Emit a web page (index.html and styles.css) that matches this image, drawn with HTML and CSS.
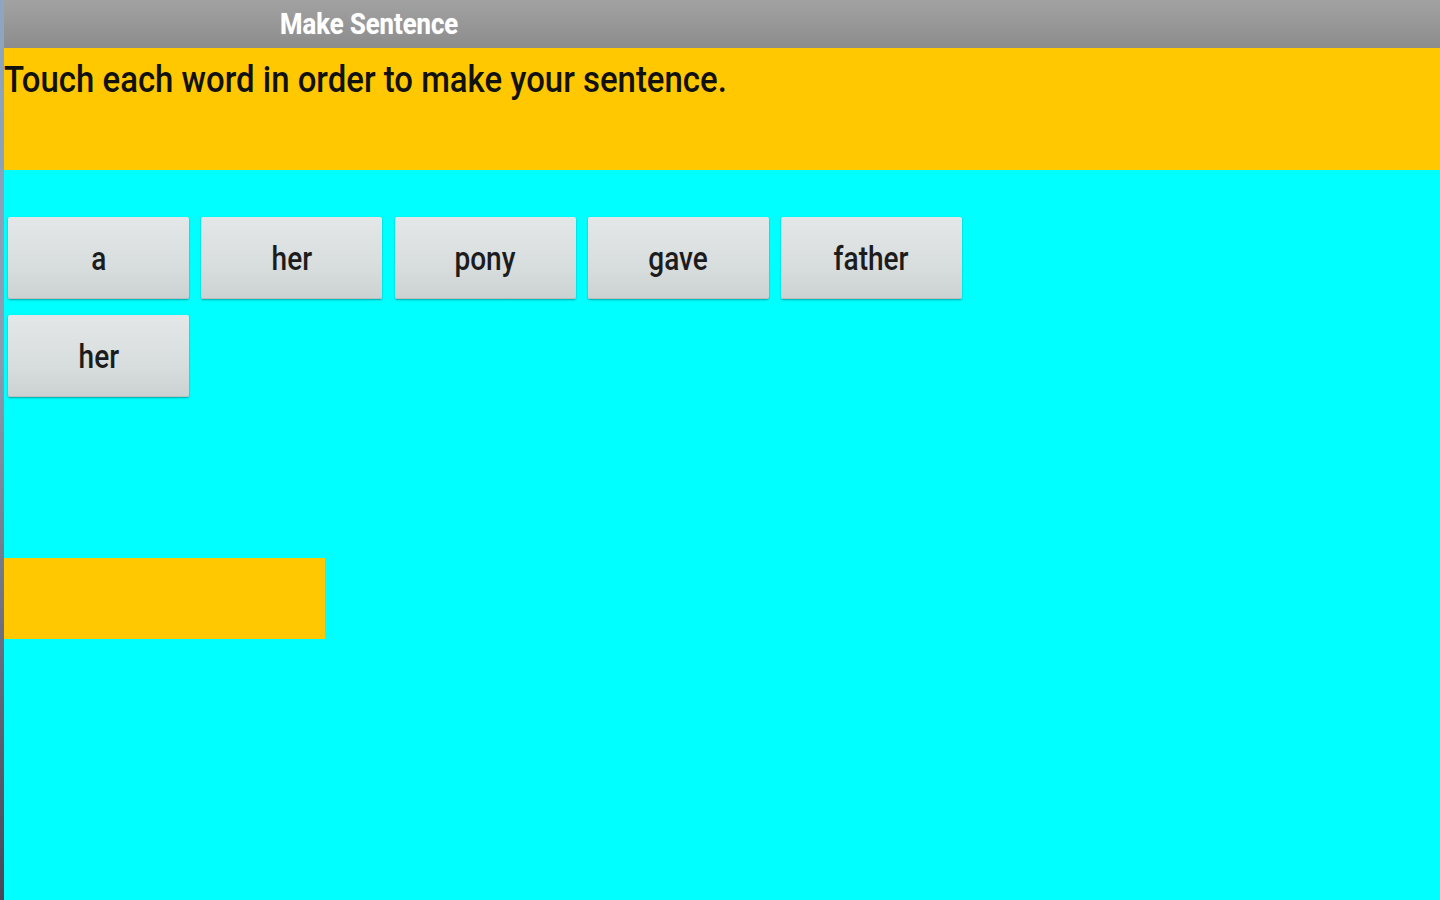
FILE: index.html
```html
<!DOCTYPE html>
<html lang="en">
<head>
<meta charset="utf-8">
<title>Make Sentence</title>
<link rel="stylesheet" href="styles.css">
</head>
<body>
<div class="screen">
  <div class="edge"></div>
  <div class="app">
    <header class="titlebar"><span class="title">Make Sentence</span></header>
    <section class="instruction"><span class="instruction-text">Touch each word in order to make your sentence.</span></section>
    <main class="content">
      <div class="words">
        <button class="word"><span class="word-label">a</span></button>
        <button class="word"><span class="word-label">her</span></button>
        <button class="word"><span class="word-label">pony</span></button>
        <button class="word"><span class="word-label">gave</span></button>
        <button class="word"><span class="word-label">father</span></button>
        <button class="word"><span class="word-label">her</span></button>
      </div>
      <div class="answer"></div>
    </main>
  </div>
</div>
</body>
</html>
```

FILE: styles.css
```css
html, body {
  margin: 0;
  padding: 0;
  width: 1440px;
  height: 900px;
  overflow: hidden;
  background: #00ffff;
  font-family: Roboto, "Liberation Sans", sans-serif;
}

.screen {
  display: flex;
  width: 1440px;
  height: 900px;
}

.edge {
  width: 4px;
  flex: none;
  background: linear-gradient(to bottom, #8ea6c0 0%, #8a9cb0 40%, #6d6f80 70%, #4a4658 100%);
}

.app {
  flex: 1;
  display: flex;
  flex-direction: column;
  min-width: 0;
}

.titlebar {
  height: 48px;
  flex: none;
  background: linear-gradient(to bottom, #a2a2a2 0%, #8c8c8c 100%);
  display: flex;
  align-items: center;
  padding-left: 276px;
  box-sizing: border-box;
}

.title {
  display: inline-block;
  color: #ffffff;
  font-size: 29px;
  font-weight: 700;
  transform: scaleX(0.885);
  transform-origin: left center;
  white-space: nowrap;
  text-shadow: 0 0 1px rgba(255,255,255,0.6);
}

.instruction {
  height: 122px;
  flex: none;
  background: #ffc800;
  box-sizing: border-box;
  padding-top: 10px;
}

.instruction-text {
  display: inline-block;
  color: #111;
  font-size: 37px;
  font-weight: 500;
  transform: scaleX(0.89);
  transform-origin: left center;
  white-space: nowrap;
}

.content {
  flex: 1;
  padding-top: 47px;
}

.words {
  display: grid;
  grid-template-columns: repeat(5, 181px);
  column-gap: 12.25px;
  row-gap: 16px;
  margin-left: 4px;
}

.word {
  height: 82px;
  margin: 0;
  padding: 0;
  border: none;
  border-radius: 2px;
  background: linear-gradient(to bottom, #e3e7e7 0%, #d8dddd 60%, #ccd1d1 100%);
  box-shadow: 0 1px 2px rgba(0,0,0,0.35), inset 0 -1px 0 #b9bebe;
  display: flex;
  align-items: center;
  justify-content: center;
  font-family: Roboto, "Liberation Sans", sans-serif;
  cursor: pointer;
}

.word-label {
  display: inline-block;
  color: #1c1c1c;
  font-size: 33px;
  font-weight: 500;
  transform: scaleX(0.85);
}

.answer {
  margin-top: 161px;
  width: 321px;
  height: 81px;
  background: #ffc800;
}
```
